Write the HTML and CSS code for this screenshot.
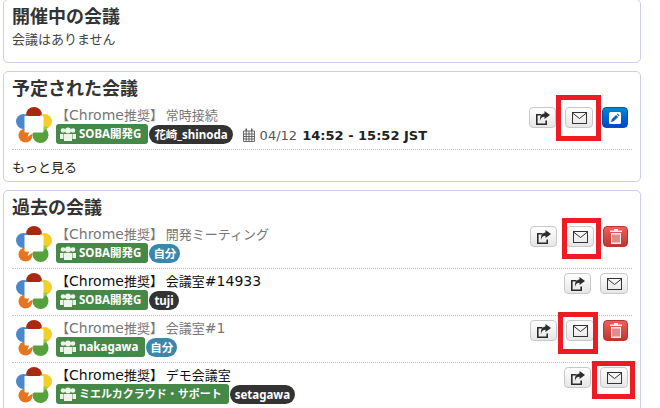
FILE: index.html
```html
<!DOCTYPE html>
<html lang="ja">
<head>
<meta charset="utf-8">
<title>会議</title>
<link rel="stylesheet" href="styles.css">
</head>
<body>
<svg class="defs" width="0" height="0" aria-hidden="true">
  <defs>
    <symbol id="logo" viewBox="0 0 36 36">
      <circle cx="18" cy="8" r="8" fill="#a8290f"/>
      <circle cx="28.500" cy="14.500" r="7.500" fill="#f4cf27"/>
      <circle cx="24.500" cy="28" r="8" fill="#57a13c"/>
      <path d="M27 19l5 1-4 4z" fill="#8fd23c"/>
      <circle cx="9.500" cy="28.500" r="7" fill="#e5761f"/>
      <circle cx="7.500" cy="14.500" r="7.500" fill="#4a87cc"/>
      <path d="M8.500 9h18q1 0 1 1v14.500q0 1-1 1H18l-6.500 4.500 1.500-4.500H9.500q-1 0-1-1z" fill="#fff"/>
    </symbol>
    <symbol id="users" viewBox="0 0 16 14">
      <g fill="#eef5e8">
        <circle cx="3" cy="3.500" r="2.300"/><circle cx="13" cy="3.500" r="2.300"/><circle cx="8" cy="3.500" r="3"/>
        <path d="M0 7h3.500v5H0zM12.500 7H16v5h-3.500zM4 7h8v7H4z"/>
      </g>
    </symbol>
    <symbol id="share" viewBox="0 0 15 14">
      <path d="M1 3h5.500v1.600H2.600v7.800h7.800V9.500H12V14H1z" fill="#2b2b2b"/>
      <path d="M9.500 0L15 4l-5.500 4V5.800C7 5.800 5.500 7 5 10 4.500 5.500 6 3 9.500 2.500z" fill="#2b2b2b"/>
    </symbol>
    <symbol id="mail" viewBox="0 0 15 12">
      <rect x=".5" y=".5" width="14" height="11" fill="none" stroke="#333"/>
      <path d="M.5 1l7 5.500 7-5.500" fill="none" stroke="#333"/>
    </symbol>
    <symbol id="trash" viewBox="0 0 12 15">
      <path d="M0 1.500h4V0h4v1.500h4V3H0zM1 4h10v11H1z" fill="#fde8ec"/>
      <path d="M3 5.500v8M5 5.500v8M7 5.500v8M9 5.500v8" stroke="#c9302c" stroke-width="1"/>
    </symbol>
    <symbol id="edit" viewBox="0 0 12 12">
      <rect width="12" height="12" rx="1.500" fill="#fff"/>
      <path d="M2 10l.7-2.700 4.400-4.400 2 2-4.400 4.400zM7.800 2.200l.8-.8 2 2-.8.8z" fill="#0a5fc0"/>
    </symbol>
    <symbol id="cal" viewBox="0 0 12 14">
      <path d="M.5 3h11v10.500H.5zM.5 6h11M.5 8.500h11M.5 11h11M3.200 3v10.500M6 3v10.500M8.800 3v10.500" fill="none" stroke="#5a5a5a" stroke-width=".9"/>
      <path d="M2.500 .5h1.500v2.500H2.500zM8 .5h1.500v2.500H8z" fill="#5a5a5a"/>
    </symbol>
  </defs>
</svg>

<main class="page">
  <section class="panel panel-live">
    <h2>開催中の会議</h2>
    <p class="empty">会議はありません</p>
  </section>

  <section class="panel panel-next">
    <h2>予定された会議</h2>
    <div class="row">
      <svg class="logo"><use href="#logo"/></svg>
      <div class="info">
        <div class="title muted">【<span class="lat">Chrome</span>推奨】 常時接続</div>
        <div class="tags">
          <span class="group"><svg class="ic-users"><use href="#users"/></svg>SOBA開発G</span>
          <span class="pill dark">花崎_shinoda</span>
          <span class="when"><svg class="ic-cal"><use href="#cal"/></svg>04/12 <b>14:52 - 15:52 JST</b></span>
        </div>
      </div>
      <div class="actions">
        <button class="btn btn-share"><svg class="ic-share"><use href="#share"/></svg></button>
        <button class="btn btn-mail"><svg class="ic-mail"><use href="#mail"/></svg></button>
        <button class="btn btn-blue"><svg class="ic-edit"><use href="#edit"/></svg></button>
      </div>
    </div>
    <p class="more">もっと見る</p>
  </section>

  <section class="panel panel-past">
    <h2>過去の会議</h2>
    <div class="row">
      <svg class="logo"><use href="#logo"/></svg>
      <div class="info">
        <div class="title muted">【<span class="lat">Chrome</span>推奨】 開発ミーティング</div>
        <div class="tags">
          <span class="group"><svg class="ic-users"><use href="#users"/></svg>SOBA開発G</span>
          <span class="pill blue">自分</span>
        </div>
      </div>
      <div class="actions">
        <button class="btn btn-share"><svg class="ic-share"><use href="#share"/></svg></button>
        <button class="btn btn-mail"><svg class="ic-mail"><use href="#mail"/></svg></button>
        <button class="btn btn-red"><svg class="ic-trash"><use href="#trash"/></svg></button>
      </div>
    </div>
    <div class="row">
      <svg class="logo"><use href="#logo"/></svg>
      <div class="info">
        <div class="title">【<span class="lat">Chrome</span>推奨】 会議室<span class="lat">#14933</span></div>
        <div class="tags">
          <span class="group"><svg class="ic-users"><use href="#users"/></svg>SOBA開発G</span>
          <span class="pill dark">tuji</span>
        </div>
      </div>
      <div class="actions">
        <button class="btn btn-share"><svg class="ic-share"><use href="#share"/></svg></button>
        <button class="btn btn-mail"><svg class="ic-mail"><use href="#mail"/></svg></button>
      </div>
    </div>
    <div class="row">
      <svg class="logo"><use href="#logo"/></svg>
      <div class="info">
        <div class="title muted">【<span class="lat">Chrome</span>推奨】 会議室<span class="lat">#1</span></div>
        <div class="tags">
          <span class="group"><svg class="ic-users"><use href="#users"/></svg>nakagawa</span>
          <span class="pill blue">自分</span>
        </div>
      </div>
      <div class="actions">
        <button class="btn btn-share"><svg class="ic-share"><use href="#share"/></svg></button>
        <button class="btn btn-mail"><svg class="ic-mail"><use href="#mail"/></svg></button>
        <button class="btn btn-red"><svg class="ic-trash"><use href="#trash"/></svg></button>
      </div>
    </div>
    <div class="row">
      <svg class="logo"><use href="#logo"/></svg>
      <div class="info">
        <div class="title">【<span class="lat">Chrome</span>推奨】 デモ会議室</div>
        <div class="tags">
          <span class="group group-ja"><svg class="ic-users"><use href="#users"/></svg>ミエルカクラウド・サポート</span>
          <span class="pill dark">setagawa</span>
        </div>
      </div>
      <div class="actions">
        <button class="btn btn-share"><svg class="ic-share"><use href="#share"/></svg></button>
        <button class="btn btn-mail"><svg class="ic-mail"><use href="#mail"/></svg></button>
      </div>
    </div>
  </section>

  <div class="mark mark-1"></div>
  <div class="mark mark-2"></div>
  <div class="mark mark-3"></div>
  <div class="mark mark-4"></div>
</main>
</body>
</html>
```

FILE: styles.css
```css
* { box-sizing: border-box; }
html, body { margin: 0; height: 408px; overflow: hidden; background: #fff; }
body { font-family: "DejaVu Sans", "Noto Sans CJK JP", sans-serif; font-size: 13px; color: #333; }
.defs { position: absolute; }
.page { position: relative; height: 408px; padding: 0 19px 0 3px; display: flex; flex-direction: column; gap: 8px; margin-top: -1px; }
.panel { border: 1px solid #ccccee; border-radius: 5px; padding: 5px 8px 0; background: #fff; flex: none; }
.panel-live { height: 64px; }
.panel-next { height: 111px; }
.panel-past { height: 240px; }
h2 { margin: 0 0 6px; font-size: 18px; line-height: 20px; font-weight: bold; color: #333; font-family: "Noto Sans CJK JP", sans-serif; }
.panel-live h2 { margin-bottom: 4px; }
.empty { margin: 0; font-size: 13px; line-height: 20px; color: #444; font-family: "Noto Sans CJK JP", sans-serif; }
.more { margin: 7px 0 0; line-height: 20px; color: #222; font-family: "Noto Sans CJK JP", sans-serif; }
.row { display: flex; height: 47px; padding: 4px 4px 0; border-bottom: 1px dotted #bbb; position: relative; }
.panel-past .row:last-child { border-bottom: 0; }
.logo { width: 36px; height: 36px; flex: none; }
.info { flex: 1; margin-left: 4px; min-width: 0; }
.title { margin-bottom: 1px; font-size: 13px; line-height: 16px; color: #111; font-family: "Noto Sans CJK JP", sans-serif; }
.title .lat { font-family: "DejaVu Sans", sans-serif; font-size: 14px; }
.title.muted { color: #777; }
.tags { display: flex; align-items: flex-start; gap: 1px; }
.group { display: inline-flex; align-items: center; height: 20px; padding: 0 7px 1px 4px; background: #468847; color: #fff; border-radius: 3px; font: bold 11.500px/18px "Noto Sans", "Noto Sans CJK JP", sans-serif; white-space: nowrap; }
.group-ja { font-size: 11px; }
.ic-users { width: 16px; height: 14px; margin-right: 3px; }
.pill { display: inline-flex; align-items: center; height: 19px; margin-top: 1px; padding: 0 5px; border-radius: 10px; color: #fff; font: bold 11.500px/19px "Noto Sans", "Noto Sans CJK JP", sans-serif; white-space: nowrap; }
.pill.dark { background: #333; }
.pill.blue { background: #3a87ad; padding: 0 4px; }
.when { margin-left: 9px; display: inline-flex; align-items: center; height: 22px; color: #555; font-size: 13px; white-space: pre; }
.when b { margin-left: 1px; color: #222; font-size: 13px; }
.ic-cal { width: 12px; height: 14px; margin-right: 5px; }
.actions { display: flex; gap: 9px; justify-content: flex-end; flex: none; }
.btn { height: 21px; padding: 0; display: flex; align-items: center; justify-content: center; border: 1px solid #c8c8c8; border-radius: 4px; background: linear-gradient(#fff, #e6e6e6); }
.btn-share { width: 27px; }
.btn-mail { width: 28px; }
.btn-blue { width: 26px; background: linear-gradient(#0088cc, #0044cc); border-color: #0055bb; }
.btn-red { width: 25px; background: linear-gradient(#ee5f5b, #bd362f); border-color: #b33; }
.ic-share { width: 15px; height: 14px; }
.ic-mail { width: 15px; height: 12px; }
.ic-trash { width: 12px; height: 15px; }
.ic-edit { width: 12px; height: 12px; }
.mark { position: absolute; border: 5px solid #ed1c24; }
.mark-1 { left: 556px; top: 96px; width: 45px; height: 46px; }
.mark-2 { left: 562px; top: 219px; width: 39px; height: 41px; }
.mark-3 { left: 558px; top: 313px; width: 40px; height: 42px; }
.mark-4 { left: 592px; top: 362px; width: 43px; height: 38px; }
```
